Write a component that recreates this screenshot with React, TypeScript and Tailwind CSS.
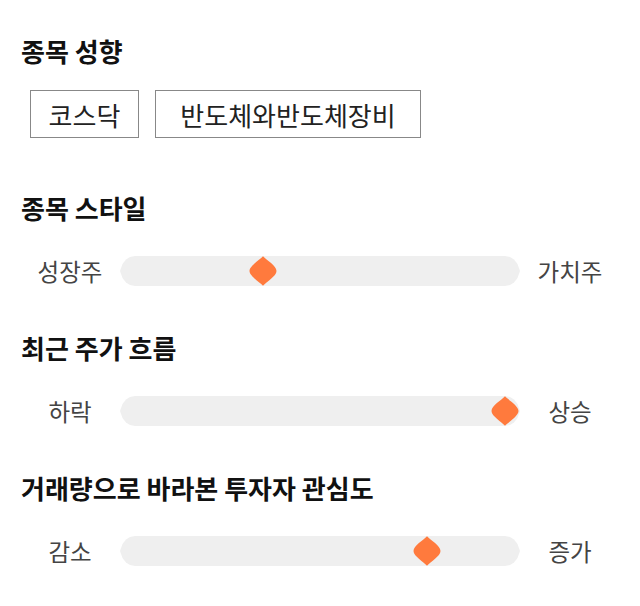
import React from "react";

const font = { fontFamily: '"Noto Sans CJK KR", "Noto Sans", sans-serif' };

function Thumb({ left }: { left: number }) {
  return (
    <svg
      width="28"
      height="30"
      viewBox="0 0 28 30"
      className="absolute top-0"
      style={{ left: left - 14 }}
    >
      <path
        d="M14 0.3 C17.5 4 27.5 10 27.5 15 C27.5 20 17.5 26 14 29.7 C10.5 26 0.5 20 0.5 15 C0.5 10 10.5 4 14 0.3 Z"
        fill="#ff7a3d"
      />
    </svg>
  );
}

function Slider({ left, right, pos }: { left: string; right: string; pos: number }) {
  return (
    <div className="grid grid-cols-[100px_400px_100px] items-center h-[30px]">
      <div className="text-center text-[23.5px] text-[#444] leading-[30px]">{left}</div>
      <div className="relative h-[30px]">
        <div className="h-[30px] w-[400px] bg-[#efefef] [clip-path:polygon(15px_0,10px_1px,6px_3.5px,2.5px_8px,0_15px,2.5px_22px,6px_26.5px,10px_29px,15px_30px,385px_30px,390px_29px,394px_26.5px,397.5px_22px,400px_15px,397.5px_8px,394px_3.5px,390px_1px,385px_0)]" />
        <Thumb left={pos} />
      </div>
      <div className="text-center text-[23.5px] text-[#444] leading-[30px]">{right}</div>
    </div>
  );
}

function Heading({ children }: { children: React.ReactNode }) {
  return (
    <div className="px-[21px] text-[26px] font-bold leading-[32px] text-[#111]">{children}</div>
  );
}

export default function App() {
  return (
    <div className="w-[640px] h-[606px] bg-white px-[20px] pt-[35px]" style={font}>
      <div className="-mx-[20px]">
        <Heading>종목 성향</Heading>
      </div>
      <div className="flex gap-[16px] mt-[23px] pl-[10px]">
        <div className="h-[48px] w-[109px] border border-[#888] flex items-center justify-center text-[26px] text-[#222]">
          코스닥
        </div>
        <div className="h-[48px] w-[266px] border border-[#888] flex items-center justify-center text-[26px] text-[#222]">
          반도체와반도체장비
        </div>
      </div>
      <div className="-mx-[20px] mt-[54px]">
        <Heading>종목 스타일</Heading>
      </div>
      <div className="mt-[32px]">
        <Slider left="성장주" right="가치주" pos={143} />
      </div>
      <div className="-mx-[20px] mt-[46px]">
        <Heading>최근 주가 흐름</Heading>
      </div>
      <div className="mt-[32px]">
        <Slider left="하락" right="상승" pos={385} />
      </div>
      <div className="-mx-[20px] mt-[46px]">
        <Heading>거래량으로 바라본 투자자 관심도</Heading>
      </div>
      <div className="mt-[32px]">
        <Slider left="감소" right="증가" pos={307} />
      </div>
    </div>
  );
}
